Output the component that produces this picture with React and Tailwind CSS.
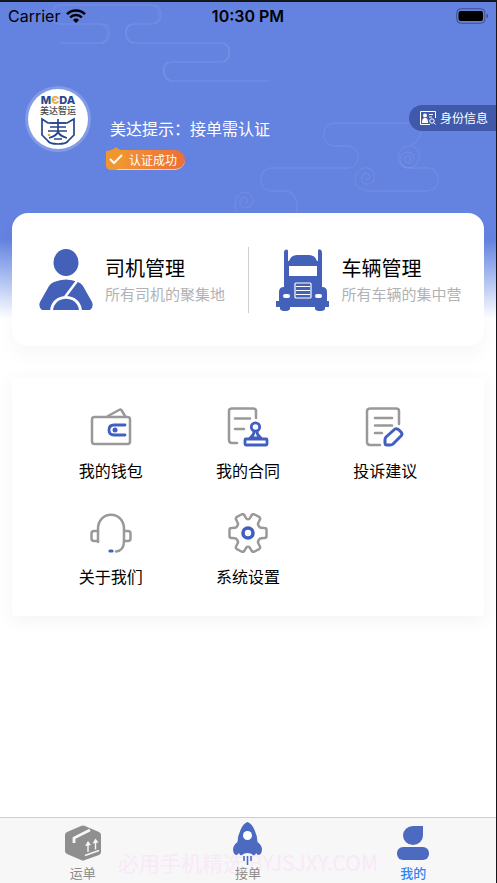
const menuItems = [
  { label: '我的钱包', icon: WalletIcon },
  { label: '我的合同', icon: ContractIcon },
  { label: '投诉建议', icon: FeedbackIcon },
  { label: '关于我们', icon: HeadsetIcon },
  { label: '系统设置', icon: SettingsIcon },
];

const tabs = [
  { label: '运单', icon: BoxIcon },
  { label: '接单', icon: RocketIcon },
  { label: '我的', icon: ProfileIcon, active: true },
];

function StatusBar() {
  return (
    <div className="grid h-7 grid-cols-3 items-center px-2 font-['Inter',sans-serif] text-[16px] leading-5 text-black">
      <div className="flex items-center gap-1.5">
        <span>Carrier</span>
        <svg className="h-[14px] w-5" viewBox="0 0 20 14" fill="none" stroke="currentColor" strokeWidth="2.5">
          <path d="M1 5.2a12.7 12.7 0 0 1 18 0M4.2 8.4a8.2 8.2 0 0 1 11.6 0" />
          <path d="M10 14l-3-3a4.3 4.3 0 0 1 6 0z" fill="currentColor" stroke="none" />
        </svg>
      </div>
      <span className="text-center font-semibold">10:30 PM</span>
      <svg className="h-4 w-8 justify-self-end" viewBox="0 0 32 16">
        <rect x="0.75" y="0.75" width="28" height="14.5" rx="4" fill="none" stroke="#000" strokeOpacity="0.4" />
        <rect x="2.5" y="3" width="24.5" height="10" rx="2" fill="#000" />
        <path d="M30.5 5.5c2 1 2 4 0 5z" fill="#000" fillOpacity="0.4" />
      </svg>
    </div>
  );
}

function CloudPattern() {
  return (
    <svg className="absolute inset-0 h-[220px] w-full" viewBox="0 0 497 220" preserveAspectRatio="xMinYMin slice" fill="none" stroke="#fff" strokeOpacity="0.08" strokeWidth="1.3">
      <path d="M60 41h40c10 0 10-19 0-19H60c-10 0-10-19 0-19" />
      <path d="M102 41c10 0 10-19 2-19" />
      <path d="M60 3h91c11 0 11 19 0 19h-17c-11 0-11 19 0 19h86c12 0 12 19 0 19h-48c-11 0-11 19 0 19h97" />
      <path d="M155 3c8 3 8 16 0 19M131 22c-8 3-6 16 3 19M224 41c8 3 7 16 0 19M168 60c-8 3-5 16 4 19" />
      <path d="M421 121h-86c-15 0-15 23 0 23h12c15 0 15 22 0 22h-75c-15 0-15 23 0 23h13c10 0 14 12 11 22" />
      <path d="M421 121c2 9-2 20-12 23-14 1-14 22 0 22h18c15 0 15 23 0 23h-59c-20-2-14-24-1-23 12 2 9 18-1 16-8-3-4-13 2-10 4 3 0 7-3 5" />
      <path d="M412 144c12 5 8 21-3 22-12 0-11-16-1-16 8 1 7 12 0 11-6-2-3-9 1-7 3 2 1 5-1 4" />
      <path d="M237 210c-6-12 3-22 11-19 10 5 4 18-5 14-6-4-2-11 3-9 3 2 1 6-2 5" />
    </svg>
  );
}

function Logo() {
  return (
    <svg className="h-[60px] w-[60px] rounded-full bg-white" viewBox="0 0 60 60" role="img" aria-label="MEDA 美达智运">
      <text x="30" y="15" textAnchor="middle" fontSize="11" fontWeight="800" fontFamily="Inter, sans-serif" fill="#2b4690">
        M<tspan fill="#efac3c">Є</tspan>DA
      </text>
      <text x="30" y="25" textAnchor="middle" fontSize="9" fontWeight="500" fontFamily="'Noto Sans CJK SC', sans-serif" fill="#4a4a4a">美达智运</text>
      <g fill="none" stroke="#24458c" strokeWidth="1.7">
        <path d="M14 30l6 4h19l7-4v16l-6 6c-2 4-18 4-20 0l-6-6z" />
        <path d="M22 34h16M22 38h16M20 42h19M30 30v13c-2 4-5 5-9 6M30 43c2 4 5 5 9 6M26 50h8" />
      </g>
      <circle cx="21" cy="46" r="1.3" fill="#efac3c" />
    </svg>
  );
}

function VerifiedBadge() {
  return (
    <div className="mt-[7px] flex h-[23px] w-[79px] items-center">
      <svg className="z-10 h-[23px] w-5 shrink-0" viewBox="0 0 20 23">
        <path d="M0 4q6 0 10-4q4 4 10 4v9q-1 7-10 10H5q-5 0-5-5z" fill="#ef962f" />
        <path d="M4 12l4 4l8-8" fill="none" stroke="#fff" strokeWidth="2" />
      </svg>
      <span className="-ml-4 mt-[3px] h-5 flex-1 rounded-full rounded-l-md border-b border-white/60 bg-gradient-to-r from-[#f09a35] to-[#ed6e35] pl-[19px] text-[12px] leading-[19px] text-white">认证成功</span>
    </div>
  );
}

function IdCardIcon() {
  return (
    <svg className="h-[14px] w-4" viewBox="0 0 16 14" fill="none" stroke="#fff" strokeWidth="1">
      <path d="M15.5 7V.5H.5v13H10" />
      <circle cx="5" cy="4.5" r="2" fill="#fff" stroke="none" />
      <path d="M2 12c0-4 1-5 3-5s3 1 3 5z" fill="#fff" stroke="none" />
      <path d="M9 3.5h4M9 6h3" />
      <circle cx="12" cy="10" r="2.2" />
      <path d="M13.5 11.5l2 2" />
    </svg>
  );
}

function DriverIcon() {
  return (
    <svg className="h-[62px] w-[54px]" viewBox="0 0 54 62">
      <ellipse cx="27" cy="13.5" rx="12.5" ry="13.5" fill="#4361b8" />
      <path d="M15 33q12-5 24 0q3 1 5 4l9 16q2 5-2 8H3q-4-3-2-8l9-16q2-3 5-4z" fill="#4361b8" />
      <path d="M38 32L26 48" fill="none" stroke="#fff" strokeWidth="2.5" />
      <path d="M11 62c1-20 31-20 32 0z" fill="#fff" />
      <path d="M14 61c2-15 24-15 26 0z" fill="#4361b8" />
    </svg>
  );
}

function TruckIcon() {
  return (
    <svg className="h-[62px] w-[54px]" viewBox="0 0 54 62">
      <path d="M8 38V3q0-2 2-2.500t2 1.500v10h1q2-6 8-6h12q6 0 8 6h1V1.500q1-2 3-.5q1 1 1 3v34q5 0 5 5v9h2v6h-4v2q-1 2-5 2q-4 0-5-2v-2H14v2q-1 2-5 2q-4 0-5-2v-2H0v-6h3V43q0-5 5-5z" fill="#4361b8" />
      <path d="M13 17h28v10H13z" fill="#fff" />
      <rect x="19" y="34" width="16" height="15" rx="1" fill="#4361b8" stroke="#fff" strokeWidth="1.2" />
      <path d="M20 37.500h14M20 41.500h14M20 45.500h14" stroke="#fff" strokeWidth="1.2" />
      <rect x="7" y="45" width="7" height="4" rx="2" fill="#fff" />
      <rect x="39" y="45" width="7" height="4" rx="2" fill="#fff" />
    </svg>
  );
}

function LineIcon({ children }) {
  return (
    <svg className="h-10 w-[42px]" viewBox="0 0 42 40" fill="none" stroke="#999" strokeWidth="2.5" strokeLinecap="round" strokeLinejoin="round">
      {children}
    </svg>
  );
}

function WalletIcon() {
  return (
    <LineIcon>
      <rect x="2" y="10" width="38" height="27" rx="2.5" />
      <path d="M18 9l11-6q2-1 3 1l3 5" />
      <path d="M35 18H24q-5 0-5 5t5 5h11" stroke="#405fc0" strokeWidth="2.8" />
      <circle cx="25" cy="23" r="2.5" fill="#405fc0" stroke="none" />
    </LineIcon>
  );
}

function ContractIcon() {
  return (
    <LineIcon>
      <path d="M29 11V4q0-2.500-3-2.500H5Q2 1.500 2 4v29q0 3 3 3h5M8 11.500h15M8 22h9" />
      <g stroke="#405fc0" strokeWidth="2.8">
        <circle cx="28.5" cy="20" r="4.2" />
        <path d="M27 25q0 3-4 6h11q-4-3-4-6" />
        <rect x="18" y="32" width="22" height="6" rx="1" />
      </g>
    </LineIcon>
  );
}

function FeedbackIcon() {
  return (
    <LineIcon>
      <path d="M35 17V4q0-2.500-3-2.500H7Q3 1.500 3 4v31q0 3 3 3h10M11 11h17M11 18.500h17M11 26h7" />
      <path d="M31 22q2-1 4 1l2 2q2 2 0 4l-8 8q-1 1-3 1h-3q-2 0-2-2v-3q0-2 1-3z" stroke="#405fc0" strokeWidth="3" />
    </LineIcon>
  );
}

function HeadsetIcon() {
  return (
    <LineIcon strokeWidth="2.2">
      <path d="M8 29V16C8-3 34-3 34 16v12c0 7-3 10-8 10.500" />
      <path d="M8 18H4q-2.500 0-2.500 2.500v5Q1.500 28 4 28h4M34 18h4q2.500 0 2.500 2.500v5Q40.500 28 38 28h-4" />
      <path d="M20 38h2" stroke="#405fc0" strokeWidth="3.2" />
    </LineIcon>
  );
}

function SettingsIcon() {
  return (
    <LineIcon>
      <path d="M37.500 15q2 0 2 2v6q0 2-2 2l-3.500.3q-1.200 0-1.800 1l-1 1.700q-.5 1 0 2l1.600 3.200q1 2-.8 3l-4.400 2.300q-1.800 1-3-.7l-1.800-3.200q-.6-.9-1.800-.9t-1.800.9l-1.800 3.200q-1.200 1.700-3 .7l-4.400-2.300q-1.800-1-.8-3l1.600-3.200q.5-1 0-2l-1-1.700q-.6-1-1.800-1L4.500 25q-2 0-2-2v-6q0-2 2-2l3.500-.3q1.200 0 1.800-1l1-1.700q.5-1 0-2L9.200 6.800q-1-2 .8-3l4.400-2.300q1.800-1 3 .7l1.800 3.200q.6.900 1.800.9t1.800-.9l1.800-3.200q1.200-1.700 3-.7L32 3.800q1.800 1 .8 3L31.200 10q-.5 1 0 2l1 1.700q.6 1 1.800 1z" />
      <circle cx="21" cy="20" r="5" stroke="#405fc0" strokeWidth="3.6" />
    </LineIcon>
  );
}

function BoxIcon() {
  return (
    <svg className="h-9 w-9" viewBox="0 0 36 36">
      <path d="M16 1q2-1 4 0l14 6q2 1 2 3v17q0 2-2 3l-14 5q-2 1-4 0L2 29q-2-1-2-3V10q0-2 2-3z" fill="#8f8f8f" />
      <path d="M9 18v-5l16-8" fill="none" stroke="#f7f7f7" strokeWidth="2.8" />
      <path d="M23 27v-7M30.500 24.500v-7M20 30.500l14-5" fill="none" stroke="#f7f7f7" strokeWidth="1.4" />
      <path d="M20 21l3-5l3 4zM27.500 18.500l3-5l3 4z" fill="#f7f7f7" />
    </svg>
  );
}

function RocketIcon() {
  return (
    <svg className="h-[43px] w-[29px]" viewBox="0 0 29 43">
      <path d="M14.500 0q4 1 7 8q3 6 3 12q4 3 4.500 7q0 5-3 6q-2 0-3-2q-1 3-3 2q-2-2-5.500-2T9 33q-2 1-3-2q-1 2-3 2q-3-1-3-6q.5-4 4.500-7q0-6 3-12q3-7 7-8z" fill="#4c6ac0" />
      <circle cx="14.500" cy="13.500" r="4.500" fill="#fff" />
      <path d="M11 34v5M14.500 34v9M18 34v5" stroke="#4c6ac0" strokeWidth="1.6" />
    </svg>
  );
}

function ProfileIcon() {
  return (
    <svg className="h-9 w-8" viewBox="0 0 32 36" fill="#4c6ac0">
      <path d="M16 1h10v9.500a10 9.500 0 1 1-10-9.500z" />
      <rect x="0" y="22" width="32" height="13" rx="6" />
    </svg>
  );
}

function ManageLink({ icon: Icon, title, hint }) {
  return (
    <a href="#" className="flex min-w-0 flex-1 items-center gap-3">
      <Icon />
      <span className="flex flex-col whitespace-nowrap">
        <span className="text-[20px] leading-7 text-black">{title}</span>
        <span className="text-[15px] leading-6 text-[#b2b2b5]">{hint}</span>
      </span>
    </a>
  );
}

export default function App() {
  return (
    <div className="relative flex min-h-screen flex-col border-t-2 border-r border-[#15161c] bg-white font-['Noto_Sans_CJK_SC',sans-serif]">
      <div className="absolute inset-x-0 top-0 h-[316px] overflow-hidden bg-gradient-to-b from-[#6482e0] from-75% to-white">
        <CloudPattern />
      </div>

      <div className="relative flex flex-1 flex-col">
        <StatusBar />

        <header className="mt-14 flex items-start pl-[25px]">
          <div className="rounded-full bg-white/20 p-[3px]">
            <Logo />
          </div>
          <div className="ml-[15px] mt-[30px]">
            <h1 className="pl-1 text-[16px] leading-6 text-white">美达提示：接单需认证</h1>
            <VerifiedBadge />
          </div>
          <button className="ml-auto mt-[19px] flex h-[26px] items-center gap-1 rounded-l-full bg-[#4059ab] pl-[11px] pr-2 text-[12px] text-white">
            <IdCardIcon />
            身份信息
          </button>
        </header>

        <section className="mx-3 mt-[43px] flex h-[133px] items-center rounded-2xl bg-white pl-[27px] shadow-[0_10px_20px_rgba(0,0,0,0.03)]">
          <ManageLink icon={DriverIcon} title="司机管理" hint="所有司机的聚集地" />
          <div className="mr-[27px] h-[66px] w-px bg-[#cfcfd3]" />
          <ManageLink icon={TruckIcon} title="车辆管理" hint="所有车辆的集中营" />
        </section>

        <nav className="mx-3 mt-8 grid grid-cols-3 gap-y-[26px] rounded bg-white px-[30px] pb-[23px] pt-[29px] shadow-[0_4px_20px_rgba(0,0,0,0.05)]">
          {menuItems.map(({ label, icon: Icon }) => (
            <a key={label} href="#" className="flex flex-col items-center gap-[6px] text-[16px] leading-[34px] text-black">
              <Icon />
              <span>{label}</span>
            </a>
          ))}
        </nav>

        <footer className="relative mt-auto grid h-[66px] grid-cols-3 border-t border-[#cdcdcf] bg-[#f7f7f7]">
          <span className="absolute inset-x-0 top-8 text-center text-[21px] leading-6 text-[#f9e9f7]">必用手机精选 BYJSJXY.COM</span>
          {tabs.map(({ label, icon: Icon, active }) => (
            <a key={label} href="#" className={`relative flex flex-col items-center text-[13px] leading-[18px] ${active ? 'font-medium text-[#2f86f6]' : 'text-[#8b8b8b]'}`}>
              <span className="flex h-[46px] items-center pt-1">
                <Icon />
              </span>
              {label}
            </a>
          ))}
        </footer>
      </div>
    </div>
  );
}
